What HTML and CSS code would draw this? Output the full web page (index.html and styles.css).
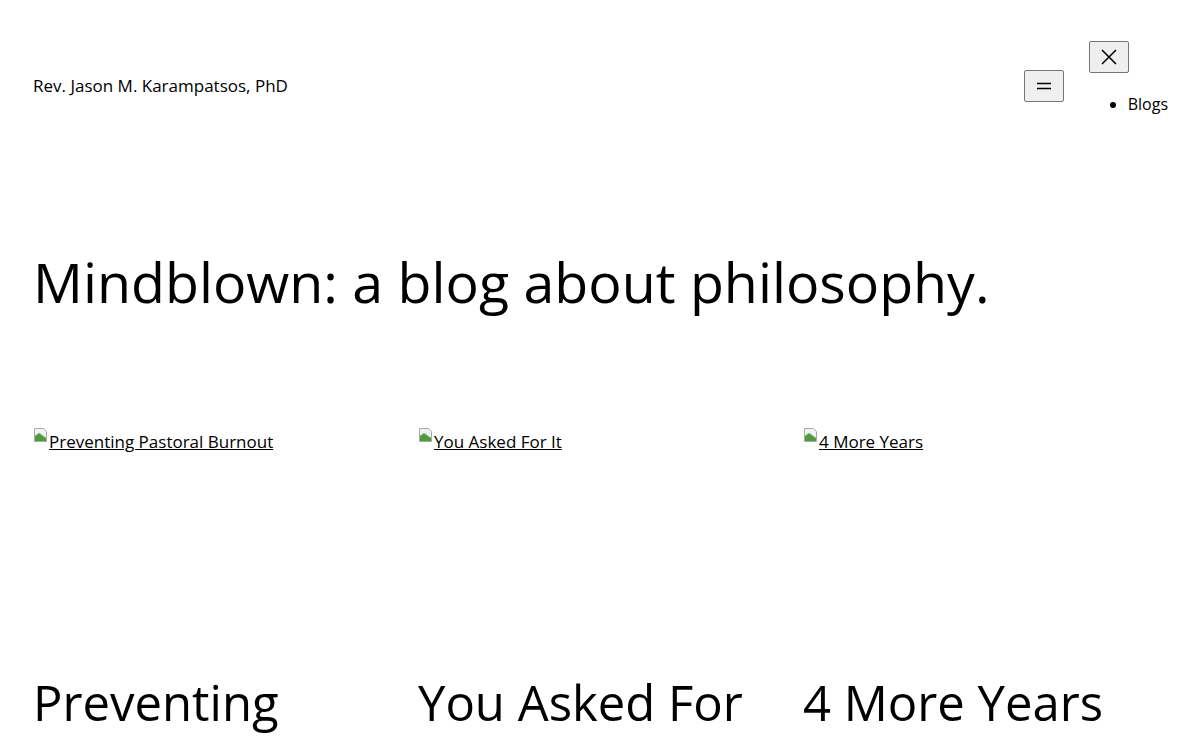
FILE: index.html
```
<!DOCTYPE html>
<html lang="en">
<head>
    <meta charset="utf-8"/>
    <title>Mindblown: a blog about philosophy.</title>
    <link rel="stylesheet" href="styles.css">
</head>
<body>
<header class="site-header">
    <p class="site-title"><a href="#">Rev. Jason M. Karampatsos, PhD</a></p>
    <nav class="site-nav">
        <button class="nav-open" aria-label="Open menu">
            <svg width="24" height="24" viewBox="0 0 24 24"><path d="M5 9.5h14M5 14.5h14" stroke="#000" stroke-width="1.5"/></svg>
        </button>
        <div class="nav-container">
            <button class="nav-close" aria-label="Close menu">
                <svg width="24" height="24" viewBox="0 0 24 24"><path d="M5 5l14 14M19 5L5 19" stroke="#000" stroke-width="1.5"/></svg>
            </button>
            <ul class="nav-list">
                <li><a href="#">Blogs</a></li>
            </ul>
        </div>
    </nav>
</header>

<main class="site-main">
    <h1 class="page-title">Mindblown: a blog about philosophy.</h1>

    <ul class="post-grid">
        <li class="post">
            <a class="post-thumb" href="#"><span class="broken-img"><svg width="16" height="16" viewBox="0 0 16 16"><path d="M1.5 1.5h9l3 3v10h-12z" fill="#eef3f8" stroke="#a8a8a8"/><path d="M2 14V9l4-3 7 5v3z" fill="#4f9a3a"/><path d="M2 9l4-3 7 5" fill="none" stroke="#9bc98c"/></svg></span>Preventing Pastoral Burnout</a>
            <h2 class="post-title">Preventing Pastoral Burnout</h2>
        </li>
        <li class="post">
            <a class="post-thumb" href="#"><span class="broken-img"><svg width="16" height="16" viewBox="0 0 16 16"><path d="M1.5 1.5h9l3 3v10h-12z" fill="#eef3f8" stroke="#a8a8a8"/><path d="M2 14V9l4-3 7 5v3z" fill="#4f9a3a"/><path d="M2 9l4-3 7 5" fill="none" stroke="#9bc98c"/></svg></span>You Asked For It</a>
            <h2 class="post-title">You Asked For It</h2>
        </li>
        <li class="post">
            <a class="post-thumb" href="#"><span class="broken-img"><svg width="16" height="16" viewBox="0 0 16 16"><path d="M1.5 1.5h9l3 3v10h-12z" fill="#eef3f8" stroke="#a8a8a8"/><path d="M2 14V9l4-3 7 5v3z" fill="#4f9a3a"/><path d="M2 9l4-3 7 5" fill="none" stroke="#9bc98c"/></svg></span>4 More Years</a>
            <h2 class="post-title">4 More Years</h2>
        </li>
    </ul>
</main>
</body>
</html>
```

FILE: styles.css
```
* {
    box-sizing: border-box;
}

body {
    margin: 0;
    font-family: "Open Sans", "Noto Sans", sans-serif;
    color: #000;
    background: #fff;
}

a {
    color: #000;
}

.site-header {
    display: flex;
    justify-content: space-between;
    align-items: flex-start;
    padding: 41px 32px 0 33px;
}

.site-title {
    margin: 0;
    padding-top: 33px;
    font-size: 17px;
}

.site-title a {
    text-decoration: none;
}

.site-nav {
    display: flex;
    align-items: flex-start;
    gap: 24px;
}

.nav-open, .nav-close {
    display: flex;
    align-items: center;
    justify-content: center;
    width: 40px;
    height: 32px;
    padding: 0;
    background: #efefef;
    border: 1px solid #767676;
    border-radius: 2px;
}

.nav-open {
    margin-top: 29px;
}

.nav-close {
    margin-left: 1px;
}

.nav-list {
    margin: 22px 0 0;
    padding-left: 40px;
    font-size: 16px;
    line-height: 1.2;
}

.nav-list a {
    text-decoration: none;
}

.site-main {
    padding: 0 32px 0 33px;
}

.page-title {
    margin: 135px 0 0;
    font-weight: 400;
    font-size: 55.5px;
    line-height: 1.2;
}

.post-grid {
    display: grid;
    grid-template-columns: repeat(3, 1fr);
    gap: 20px;
    margin: 109px 0 0;
    padding: 0;
    list-style: none;
}

.post-thumb {
    display: block;
    height: 248px;
    font-size: 17px;
}

.broken-img {
    display: inline-block;
    width: 16px;
    height: 16px;
    vertical-align: 5px;
}

.post-title {
    margin: 0;
    font-weight: 400;
    font-size: 49px;
    line-height: 1.2;
}
```
